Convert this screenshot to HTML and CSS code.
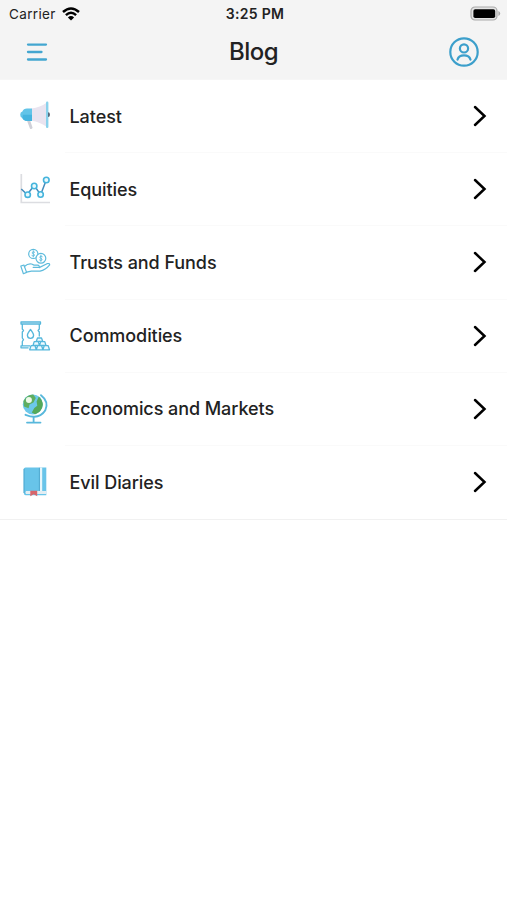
FILE: index.html
```html
<!DOCTYPE html>
<html lang="en">
<head>
    <meta charset="UTF-8">
    <meta name="viewport" content="width=device-width, initial-scale=1.0">
    <title>Blog</title>
    <link rel="stylesheet" href="styles.css">
</head>
<body>

<header class="header">
    <!-- Status bar -->
    <div class="status-bar">
        <div class="carrier">
            <span>Carrier</span>
            <svg class="wifi" width="18" height="14" viewBox="0 0 18 14" fill="none" stroke="#000" stroke-width="2.5">
                <path d="M1 5 Q9 -2 17 5"/>
                <path d="M3.9 8.1 Q9 3.5 14.1 8.1"/>
                <path d="M9 13.6 L5.9 10.4 Q9 7.8 12.1 10.4 Z" fill="#000" stroke="none"/>
            </svg>
        </div>
        <span class="time">3:25 PM</span>
        <svg class="battery" width="31" height="15" viewBox="0 0 31 15">
            <rect x="1" y="1" width="26" height="13" rx="4" fill="#e4e4e4" stroke="#aaa" stroke-width="1.2"/>
            <rect x="3.4" y="3.2" width="21.8" height="8.8" rx="1.8" fill="#000"/>
            <path d="M28.4 5 Q30.2 5.6 30.2 7.5 Q30.2 9.4 28.4 10 Z" fill="#aaa"/>
        </svg>
    </div>

    <!-- Navigation bar -->
    <nav class="nav-bar">
        <button class="nav-button" aria-label="Menu">
            <svg width="22" height="20" viewBox="0 0 22 20" stroke="#43a6d0" stroke-width="2.3" stroke-linecap="round">
                <path d="M2 2.6 H20 M2 10 H15.5 M2 17.5 H20"/>
            </svg>
        </button>
        <h1 class="title">Blog</h1>
        <button class="nav-button" aria-label="Account">
            <svg width="32" height="32" viewBox="0 0 32 32" fill="none" stroke="#3c9fcb" stroke-width="2.2" stroke-linecap="round">
                <circle cx="16" cy="16" r="13.7"/>
                <circle cx="16" cy="12.4" r="4.1"/>
                <path d="M9.5 23.6 Q10.7 19.4 16 19.4 Q21.3 19.4 22.5 23.6"/>
            </svg>
        </button>
    </nav>
</header>

<main class="list">
    <a class="row">
        <svg class="icon" viewBox="0 0 30 30">
            <path d="M6.8 19 L10 19 L12.6 26.8 Q11.6 28.6 10 27.7 Z" fill="#cfd0d8"/>
            <path d="M11.5 7.6 Q20 6.5 27 1.5 V26 Q20 21 11.5 19.8 Z" fill="#e9e4f0"/>
            <path d="M12 7.6 V19.9 H7 Q3.4 19.8 2.4 17 Q.2 16.5 .2 13.7 Q.2 11 2.4 10.5 Q3.4 7.7 7 7.6 Z" fill="#62c4e8"/>
            <path d="M3 13.7 H12 V19.9 H7 Q3.4 19.8 2.4 17 Z" fill="#45b4df"/>
            <rect x="26" y=".6" width="2.4" height="26.4" rx="1.1" fill="#8ad2ec"/>
            <path d="M28 11.3 Q30 11.3 30 13.7 Q30 16 28 16 Z" fill="#56687a"/>
        </svg>
        <span class="label">Latest</span>
        <svg class="chevron" viewBox="0 0 16 24"><path d="M3 3 L12.5 12 L3 21"/></svg>
    </a>
    <a class="row">
        <svg class="icon" viewBox="0 0 30 30" fill="none">
            <path d="M1.3 0 V28.5 H30" stroke="#dcdde1" stroke-width="1.7"/>
            <path d="M1.3 15 L6.3 19.8 M8.6 18.7 L12.4 13.8 M15.6 13.5 L19 18.4 M21.7 17.9 L25.3 8.4" stroke="#448bbb" stroke-width="1.5"/>
            <g fill="#e9f9fd" stroke="#45b4dc" stroke-width="1.6">
                <circle cx="7.7" cy="20.7" r="2.7"/>
                <circle cx="14.2" cy="12" r="2.7"/>
                <circle cx="20.6" cy="20.5" r="2.7"/>
                <circle cx="26.3" cy="6" r="2.8"/>
            </g>
        </svg>
        <span class="label">Equities</span>
        <svg class="chevron" viewBox="0 0 16 24"><path d="M3 3 L12.5 12 L3 21"/></svg>
    </a>
    <a class="row">
        <svg class="icon" viewBox="0 0 30 30" fill="none" stroke="#5ebbdc" stroke-width="1.2" stroke-linejoin="round" stroke-linecap="round">
            <circle cx="13.3" cy="6.9" r="4.6"/>
            <circle cx="20.9" cy="11.3" r="4.9" fill="#fff"/>
            <g stroke-width=".9">
                <path d="M14.7 5.2 Q13.3 4.1 12.3 5.3 Q11.8 6.5 13.4 6.9 Q15 7.5 14.3 8.7 Q13.2 9.7 11.9 8.6 M13.3 3.7 V10"/>
                <path d="M22.3 9.6 Q20.9 8.5 19.9 9.7 Q19.4 10.9 21 11.3 Q22.6 11.9 21.9 13.1 Q20.8 14.1 19.5 13 M20.9 8.1 V14.4"/>
            </g>
            <path d="M.8 19.1 L3.9 18 L6.6 25.4 L3.4 26.7 Z"/>
            <path d="M4.4 19.5 Q8 16.2 11.6 17 L14 18.1 H17.6 Q19.6 18.3 19.2 20.4 H13.2 M19.2 20.6 L27 16.7 Q29.4 16 29.7 17.8 Q25.5 22.9 20 24.2 H11.4 L6.6 25.2"/>
        </svg>
        <span class="label">Trusts and Funds</span>
        <svg class="chevron" viewBox="0 0 16 24"><path d="M3 3 L12.5 12 L3 21"/></svg>
    </a>
    <a class="row">
        <svg class="icon" viewBox="0 0 30 30" fill="none" stroke="#55b7db" stroke-width="1.3" stroke-linejoin="round">
            <path d="M1 1 H20.5 V3 H1 Z"/>
            <path d="M2.3 3 V8 L3.5 9.5 L2.3 11 V17 L3.5 18.7 L2.3 20.5 V24.7 M19.3 3 V8 L18.1 9.5 L19.3 11 V15.5 M10 24.8 H1 V26.8 H8.6"/>
            <path d="M10.5 8.5 Q7.4 12.5 7.4 14.4 Q7.6 17.3 10.5 17.4 Q13.4 17.3 13.6 14.4 Q13.6 12.5 10.5 8.5 Z"/>
            <g fill="#eefaff">
                <path d="M16.2 20.4 L17.5 17 H21.5 L22.8 20.4 Z"/>
                <path d="M13 24.5 L14.2 20.6 H18.3 L19.5 24.5 Z M19.5 24.5 L20.7 20.6 H24.8 L26 24.5 Z"/>
                <path d="M9.7 28.8 L11 24.7 H15 L16.3 28.8 Z M16.3 28.8 L17.6 24.7 H21.6 L22.9 28.8 Z M22.9 28.8 L24.2 24.7 H28.2 L29.5 28.8 Z"/>
            </g>
        </svg>
        <span class="label">Commodities</span>
        <svg class="chevron" viewBox="0 0 16 24"><path d="M3 3 L12.5 12 L3 21"/></svg>
    </a>
    <a class="row">
        <svg class="icon" viewBox="0 0 30 30">
            <path d="M21 1.2 Q29.4 7.7 25.2 16.6 Q19 26.2 5.5 20.8" fill="none" stroke="#58b8dc" stroke-width="1.9" stroke-linecap="round"/>
            <path d="M13.6 23.5 V28.2 M7 28.6 H20.5" stroke="#58b8dc" stroke-width="1.8" stroke-linecap="round"/>
            <circle cx="12.8" cy="10.4" r="10" fill="#6cc8ea"/>
            <path d="M3.4 7 Q6.6 .7 13.2 .4 L15.8 4 L13.5 8.5 L9.5 10.5 L8.6 14.2 L4 12.4 Z" fill="#5fae60"/>
            <path d="M18.8 2.6 Q22.8 6.2 22.8 11 Q21.9 18 15 20.2 L11.8 18.4 L14.3 14 L17.3 11.8 L16.6 7.5 Z" fill="#55a95a"/>
            <circle cx="8.9" cy="5.9" r="3" fill="#edfae9"/>
        </svg>
        <span class="label">Economics and Markets</span>
        <svg class="chevron" viewBox="0 0 16 24"><path d="M3 3 L12.5 12 L3 21"/></svg>
    </a>
    <a class="row">
        <svg class="icon" viewBox="0 0 30 30">
            <path d="M5.5 .5 H26.3 V28.3 H5.5 Q3.7 28 3.7 25.5 V2.5 Q3.9 .7 5.5 .5 Z" fill="#68c4e9"/>
            <path d="M19.8 .5 H22.2 V24.2 H19.8 Z" fill="#e6f6fb"/>
            <path d="M6 24 H26.3 V27.1 H6 Q4.8 25.5 6 24 Z" fill="#e3edf2"/>
            <path d="M4 1.8 V26 M19.4 .8 V24" stroke="#429fc8" stroke-width=".8"/>
            <path d="M10.3 23.8 H17.2 V29.2 L13.7 27.3 L10.3 29.2 Z" fill="#d7656b"/>
        </svg>
        <span class="label">Evil Diaries</span>
        <svg class="chevron" viewBox="0 0 16 24"><path d="M3 3 L12.5 12 L3 21"/></svg>
    </a>
</main>

</body>
</html>
```
FILE: styles.css
```css
body {
    margin: 0;
    background: #fff;
    color: #222;
    font-family: Inter, sans-serif;
}
.header {
    height: 80px;
    box-sizing: border-box;
    background: #f4f4f4;
    border-bottom: 1px solid #f6f6f6;
}
.status-bar {
    display: grid;
    grid-template-columns: 1fr auto 1fr;
    align-items: center;
    height: 27px;
    padding: 0 6px 0 9px;
    font-size: 13.5px;
}
.carrier {
    display: flex;
    align-items: center;
    gap: 6px;
    letter-spacing: 0.35px;
}
.time {
    font-size: 14px;
    font-weight: 600;
    letter-spacing: 0.3px;
}
.battery {
    justify-self: end;
}
.nav-bar {
    display: grid;
    grid-template-columns: 1fr auto 1fr;
    align-items: center;
    height: 50px;
    padding: 0 27px 0 26px;
}
.nav-button {
    display: flex;
    padding: 0;
    border: 0;
    background: none;
}
.nav-button:last-child {
    justify-self: end;
}
.title {
    margin: 0;
    padding: 0 0 2px 1px;
    font-size: 24px;
    font-weight: 500;
    letter-spacing: -0.5px;
}
.list {
    border-bottom: 1px solid #f1f1f1;
}
.row {
    display: grid;
    grid-template-columns: 30px 1fr 16px;
    column-gap: 19.5px;
    align-items: center;
    height: 73.2px;
    padding: 0 19px 1px 20px;
    box-sizing: border-box;
    background: linear-gradient(#fafafa, #fafafa) 65px 100% / 100% 1px no-repeat;
}
.row:last-child {
    background: none;
}
.icon {
    width: 30px;
    height: 30px;
    overflow: visible;
}
.label {
    font-size: 18px;
    font-weight: 500;
    letter-spacing: -0.07px;
}
.chevron {
    width: 16px;
    height: 24px;
    fill: none;
    stroke: #000;
    stroke-width: 2.5;
    stroke-linecap: round;
}
```
